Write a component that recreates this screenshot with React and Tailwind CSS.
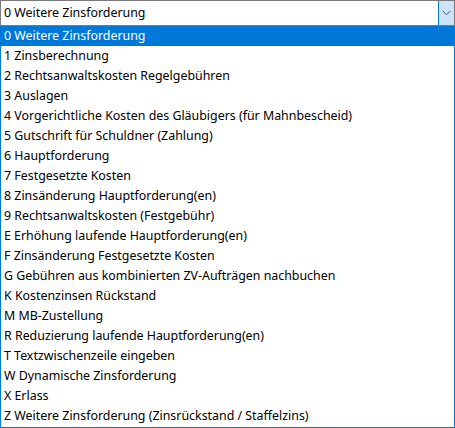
const items = [
  '0 Weitere Zinsforderung',
  '1 Zinsberechnung',
  '2 Rechtsanwaltskosten Regelgebühren',
  '3 Auslagen',
  '4 Vorgerichtliche Kosten des Gläubigers (für Mahnbescheid)',
  '5 Gutschrift für Schuldner (Zahlung)',
  '6 Hauptforderung',
  '7 Festgesetzte Kosten',
  '8 Zinsänderung Hauptforderung(en)',
  '9 Rechtsanwaltskosten (Festgebühr)',
  'E Erhöhung laufende Hauptforderung(en)',
  'F Zinsänderung Festgesetzte Kosten',
  'G Gebühren aus kombinierten ZV-Aufträgen nachbuchen',
  'K Kostenzinsen Rückstand',
  'M MB-Zustellung',
  'R Reduzierung laufende Hauptforderung(en)',
  'T Textzwischenzeile eingeben',
  'W Dynamische Zinsforderung',
  'X Erlass',
  'Z Weitere Zinsforderung (Zinsrückstand / Staffelzins)',
];

export default function App() {
  const selected = 0;
  return (
    <div className="w-[455px] h-[428px] bg-white text-[12.4px] text-black font-['Segoe_UI','Noto_Sans',sans-serif]">
      {/* Combo */}
      <div className="flex h-[26px] border border-[#7a7a7a] bg-white">
        <div className="flex-1 flex items-center pl-[3px] pt-px leading-none">{items[selected]}</div>
        <div className="w-[16px] flex items-center justify-center bg-[#cce4f7] border-l border-[#0078d7]">
          <svg width="9" height="6" viewBox="0 0 9 6" fill="none">
            <path d="M0.5 0.8 L4.5 4.8 L8.5 0.8" stroke="#5a5a5a" strokeWidth="1" />
          </svg>
        </div>
      </div>

      {/* List */}
      <div className="h-[402px] border border-t-0 border-[#0078d7] flex flex-col">
        {items.map((label, i) => (
          <div
            key={label}
            className={`h-[20px] flex items-center pl-[3px] pt-px whitespace-nowrap ${
              i === selected ? 'bg-[#0078d7] text-white' : ''
            }`}
          >
            {label}
          </div>
        ))}
      </div>
    </div>
  );
}
